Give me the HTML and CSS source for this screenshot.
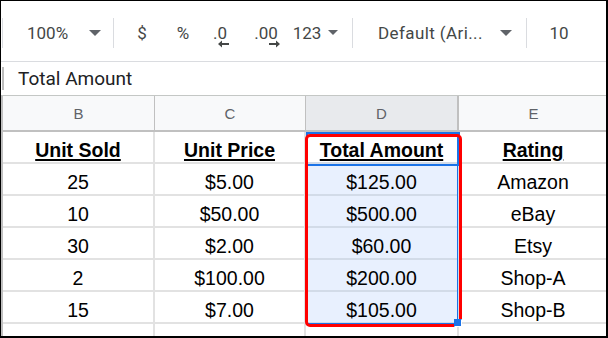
FILE: index.html
```html
<!DOCTYPE html>
<html lang="en">
<head>
    <meta charset="UTF-8">
    <meta name="viewport" content="width=device-width, initial-scale=1.0">
    <link rel="stylesheet" href="styles.css">
</head>
<body>
    <div class="frame">
        <div class="toolbar">
            <div class="sep sep-edge"></div>
            <div class="tool zoom">100%</div>
            <div class="caret caret-zoom"></div>
            <div class="sep sep-zoom"></div>
            <div class="tool dollar">$</div>
            <div class="tool percent">%</div>
            <div class="tool dec dec-less">.0
                <svg width="12" height="8" viewBox="0 0 12 8"><path d="M0 4 L4 0.5 V3 H11 V5 H4 V7.5 Z" fill="#444746"/></svg>
            </div>
            <div class="tool dec dec-more">.00
                <svg width="12" height="8" viewBox="0 0 12 8"><path d="M12 4 L8 0.5 V3 H1 V5 H8 V7.5 Z" fill="#444746"/></svg>
            </div>
            <div class="tool numfmt">123</div>
            <div class="caret caret-small"></div>
            <div class="sep sep-font"></div>
            <div class="tool font">Default (Ari...</div>
            <div class="caret caret-font"></div>
            <div class="sep sep-size"></div>
            <div class="tool size">10</div>
        </div>

        <div class="formula-bar">
            <div class="formula-edge"></div>
            <span class="formula-text">Total Amount</span>
        </div>

        <div class="sheet">
            <div class="col-head">
                <div class="col-label">B</div>
                <div class="col-label">C</div>
                <div class="col-label selected">D</div>
                <div class="col-label">E</div>
            </div>

            <div class="row">
                <div class="cell head">Unit Sold</div>
                <div class="cell head">Unit Price</div>
                <div class="cell head sel">Total Amount</div>
                <div class="cell head">Rating</div>
            </div>
            <div class="row">
                <div class="cell">25</div>
                <div class="cell">$5.00</div>
                <div class="cell sel">$125.00</div>
                <div class="cell">Amazon</div>
            </div>
            <div class="row">
                <div class="cell">10</div>
                <div class="cell">$50.00</div>
                <div class="cell sel">$500.00</div>
                <div class="cell">eBay</div>
            </div>
            <div class="row">
                <div class="cell">30</div>
                <div class="cell">$2.00</div>
                <div class="cell sel">$60.00</div>
                <div class="cell">Etsy</div>
            </div>
            <div class="row">
                <div class="cell">2</div>
                <div class="cell">$100.00</div>
                <div class="cell sel">$200.00</div>
                <div class="cell">Shop-A</div>
            </div>
            <div class="row">
                <div class="cell">15</div>
                <div class="cell">$7.00</div>
                <div class="cell sel">$105.00</div>
                <div class="cell">Shop-B</div>
            </div>
            <div class="row">
                <div class="cell"></div>
                <div class="cell"></div>
                <div class="cell"></div>
                <div class="cell"></div>
            </div>

            <!-- selection range over column D -->
            <div class="selection">
                <div class="active-cell"></div>
            </div>
            <div class="highlight"></div>
            <div class="handle"></div>
        </div>
    </div>
</body>
</html>
```

FILE: styles.css
```css
/* page and outer frame */
body {
    margin: 0;
    background: #fff;
}

.frame {
    width: 608px;
    height: 338px;
    box-sizing: border-box;
    border: 1px solid #000;
    border-right-width: 2px;
    border-bottom-width: 2px;
    overflow: hidden;
    font-family: Roboto, "Liberation Sans", sans-serif;
}

/* toolbar */
.toolbar {
    height: 61px;
    box-sizing: border-box;
    padding-top: 3px;
    border-bottom: 1px solid #dadce0;
    display: flex;
    align-items: center;
    color: #444746;
    font-size: 17px;
}

.sep {
    width: 1px;
    height: 30px;
    background: #dadce0;
    flex-shrink: 0;
}

.sep-edge {
    margin-left: 1px;
}

.tool {
    display: flex;
    flex-direction: column;
    align-items: center;
    line-height: 20px;
    flex-shrink: 0;
    white-space: nowrap;
}

.zoom {
    width: 44px;
    align-items: flex-start;
    margin-left: 24px;
}

.caret {
    width: 0;
    height: 0;
    border-left: 6px solid transparent;
    border-right: 6px solid transparent;
    border-top: 6px solid #5f6368;
    flex-shrink: 0;
}

.caret-zoom {
    margin-left: 18px;
}

.sep-zoom {
    margin-left: 12px;
}

.dollar {
    width: 20px;
    margin-left: 18px;
}

.percent {
    width: 20px;
    margin-left: 21px;
}

.dec {
    position: relative;
    height: 20px;
}

.dec svg {
    position: absolute;
    top: 17px;
}

.dec-less {
    width: 24px;
    margin-left: 15px;
}

.dec-less svg {
    left: 10px;
}

.dec-more {
    width: 32px;
    margin-left: 18px;
}

.dec-more svg {
    left: 18px;
}

.numfmt {
    width: 32px;
    margin-left: 9px;
}

.caret-small {
    border-left-width: 5px;
    border-right-width: 5px;
    border-top-width: 5px;
    margin-left: 5px;
}

.sep-font {
    margin-left: 14px;
}

.font {
    width: 100px;
    align-items: flex-start;
    margin-left: 25px;
    letter-spacing: 0.4px;
}

.caret-font {
    margin-left: 22px;
}

.sep-size {
    margin-left: 14px;
}

.size {
    width: 20px;
    margin-left: 22px;
}

/* formula bar */
.formula-bar {
    height: 33px;
    display: flex;
    align-items: center;
    font-size: 19px;
    color: #202124;
}

.formula-edge {
    width: 2px;
    height: 23px;
    background: #bdbdbd;
    margin-left: 1px;
    margin-right: 14px;
}

/* grid */
.sheet {
    position: relative;
    border-top: 1px solid #c4c7c5;
    border-left: 2px solid #c0c0c0;
    font-family: "Liberation Sans", Arial, sans-serif;
    color: #000;
}

.col-head {
    display: grid;
    grid-template-columns: 152px 151px 153px 150px;
    height: 34px;
    border-bottom: 2px solid #c0c0c0;
    background: #f8f9fa;
}

.col-label {
    border-right: 1px solid #c0c0c0;
    display: flex;
    align-items: center;
    justify-content: center;
    font-size: 15px;
    color: #5f6368;
}

.col-label.selected {
    background: #e8eaed;
    border-right-width: 2px;
}

.row {
    display: grid;
    grid-template-columns: 152px 151px 153px 150px;
    height: 32px;
}

.cell {
    border-right: 2px solid #e2e2e2;
    border-bottom: 2px solid #e2e2e2;
    display: flex;
    align-items: flex-end;
    justify-content: center;
    box-sizing: border-box;
    font-size: 19.5px;
    white-space: nowrap;
}

.cell.sel {
    background: #e8f0fe;
    border-color: #d2dbe8;
}

.cell.head {
    font-weight: bold;
    text-decoration: underline;
    text-underline-offset: 2px;
    text-decoration-thickness: 2px;
}

.cell.head.sel {
    background: #fff;
}

/* selection overlay */
.selection {
    position: absolute;
    left: 303px;
    top: 36px;
    width: 150px;
    height: 190px;
    border: 1px solid #1a73e8;
}

.active-cell {
    position: absolute;
    left: -1px;
    top: -1px;
    width: 150px;
    height: 30px;
    border: 2px solid #1a73e8;
}

.highlight {
    position: absolute;
    left: 302px;
    top: 38px;
    width: 151px;
    height: 187px;
    border: 3px solid #f00;
    border-radius: 5px;
}

.handle {
    position: absolute;
    left: 451px;
    top: 223px;
    width: 6px;
    height: 6px;
    background: #1a73e8;
    border: 1px solid #fff;
    border-top-color: transparent;
    border-left-color: transparent;
}
```
